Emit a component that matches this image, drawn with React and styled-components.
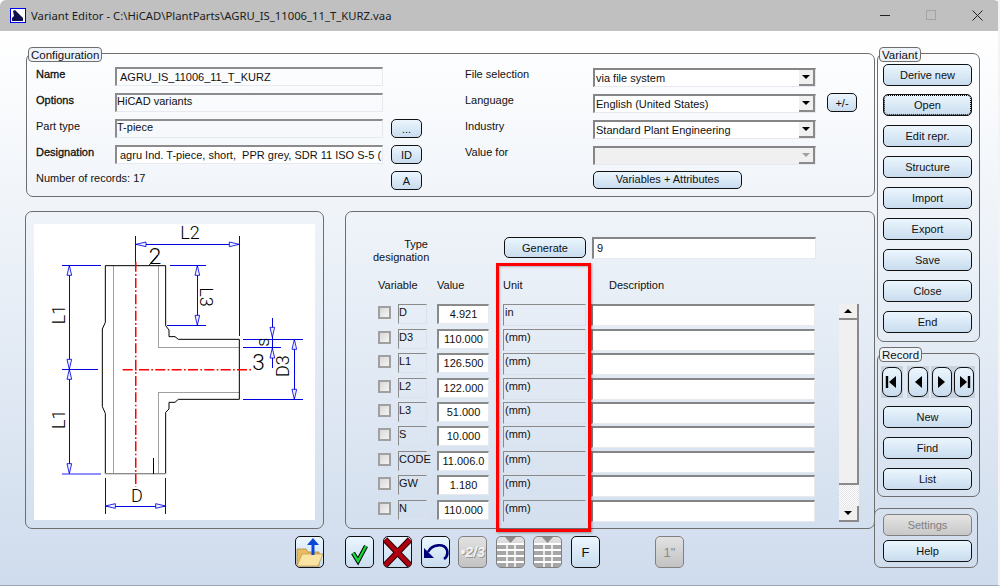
import React from "react";
import styled, { createGlobalStyle } from "styled-components";

const GlobalStyle = createGlobalStyle`
  html, body {
    margin: 0;
    background: #fff;
  }
  body {
    font-family: "Liberation Sans", Arial, sans-serif;
    font-size: 11px;
    color: #111;
  }
`;

const variantButtons = ["Derive new", "Open", "Edit repr.", "Structure", "Import", "Export", "Save", "Close", "End"];
const recordButtons = ["New", "Find", "List"];
const records = [
  { name: "D", value: "4.921", unit: "in" },
  { name: "D3", value: "110.000", unit: "(mm)" },
  { name: "L1", value: "126.500", unit: "(mm)" },
  { name: "L2", value: "122.000", unit: "(mm)" },
  { name: "L3", value: "51.000", unit: "(mm)" },
  { name: "S", value: "10.000", unit: "(mm)" },
  { name: "CODE", value: "11.006.0", unit: "(mm)" },
  { name: "GW", value: "1.180", unit: "(mm)" },
  { name: "N", value: "110.000", unit: "(mm)" },
];

const Arrow = ({ x, y, angle }) => (
  <path
    d="M0 0 L30 -7 V7 Z"
    transform={`translate(${x} ${y}) rotate(${angle})`}
    fill="#eef1ff"
    stroke="#0000e0"
    strokeWidth="2.5"
  />
);

const blueLines = [
  "M343 93V180", "M655 93V392", "M345 118H655",
  "M122 181H240", "M122 493H232", "M145 181V806",
  "M447 181H555", "M438 361H555", "M529 181V361",
  "M667 403H845", "M667 427H780", "M754 340V490",
  "M667 583H845", "M820 403V583",
  "M253 820V928", "M434 820V928", "M253 903H434",
];

const arrows = [
  [345, 118, 0], [655, 118, 180], [145, 181, 90], [145, 493, -90], [145, 493, 90], [145, 806, -90],
  [529, 181, 90], [529, 361, -90], [754, 397, -90], [754, 429, 90], [820, 403, 90], [820, 583, -90],
  [253, 903, 0], [434, 903, 180],
];

const PartDrawing = () => (
  <DrawingSvg viewBox="39 57 843 888">
    <g fill="none" stroke="#a0a0a0" strokeWidth="3" shapeRendering="crispEdges">
      <path d="M277 182V806M412 182V427H655M412 806V562H655" />
    </g>
    <path
      d="M434 182H253V352L244 372V605L253 625V806H434V622L444 612V592H462L472 583H655V403H472L462 395H444V375L434 362Z"
      fill="none"
      stroke="#000"
      strokeWidth="3"
    />
    <path d="M253 806H434" stroke="#8a8a8a" strokeWidth="3" shapeRendering="crispEdges" />
    <g fill="none" stroke="#0000e0" strokeWidth="3" shapeRendering="crispEdges">
      {blueLines.map((d) => (
        <path key={d} d={d} />
      ))}
    </g>
    <path d="M122 806H240" stroke="#8f8fff" strokeWidth="5" shapeRendering="crispEdges" />
    <path d="M344.25 170V845M305 494.25H695" fill="none" stroke="#ff0000" strokeWidth="4.5" strokeDasharray="30 7 5 7" />
    {arrows.map(([x, y, angle]) => (
      <Arrow key={`${x}-${y}-${angle}`} x={x} y={y} angle={angle} />
    ))}
    <path d="M385 180L410 150" stroke="#000" strokeWidth="3" />
    <path d="M397 758V806" stroke="#000" strokeWidth="3" shapeRendering="crispEdges" />
    <DrawingText x="478" y="103">L2</DrawingText>
    <DrawingText x="0" y="0" transform="translate(131 358) rotate(-90)">L1</DrawingText>
    <DrawingText x="0" y="0" transform="translate(131 672) rotate(-90)">L1</DrawingText>
    <DrawingText x="0" y="0" transform="translate(537 247) rotate(90)">L3</DrawingText>
    <DrawingText x="0" y="0" transform="translate(804 516) rotate(-90)">D3</DrawingText>
    <DrawingText x="0" y="0" transform="translate(743 425) rotate(-90)">s</DrawingText>
    <DrawingText x="330" y="890">D</DrawingText>
    <DrawingText x="694" y="494" $large>3</DrawingText>
    <DrawingText x="383" y="176" $large>2</DrawingText>
  </DrawingSvg>
);

const FolderIcon = () => (
  <svg width="27" height="30" viewBox="1 1 27 30">
    <path d="M2 13h9l2 3h11v14H2Z" fill="#e9bd5f" stroke="#a8823a" strokeWidth="0.7" />
    <path d="M7 18h21l-5 12H2Z" fill="#fbe3a2" stroke="#b8934a" strokeWidth="0.7" />
    <path d="M18 19V5" stroke="#0a45d8" strokeWidth="3" />
    <path d="M12 9l6-7 6 7Z" fill="#0a45d8" />
  </svg>
);

const CheckIcon = () => (
  <svg width="27" height="30" viewBox="1 1 27 30">
    <path d="M8 17l5 8 8-15" fill="none" stroke="#000" strokeWidth="4.4" />
    <path d="M8 17l5 8 8-15" fill="none" stroke="#12d63a" strokeWidth="2.4" />
  </svg>
);

const CrossIcon = () => (
  <svg width="27" height="30" viewBox="0 1 28 30">
    <path d="M1 3L27 30M27 3L1 30" fill="none" stroke="#200" strokeWidth="6.5" />
    <path d="M1 3L27 30M27 3L1 30" fill="none" stroke="#b00010" strokeWidth="4.5" />
  </svg>
);

const UndoIcon = () => (
  <svg width="27" height="30" viewBox="1 1 27 30">
    <path d="M7 16C11 8 23 7 26 14C27 18 26 21 23 23" fill="none" stroke="#00007a" strokeWidth="2.6" />
    <path d="M3 12V22H13Z" fill="#00007a" />
  </svg>
);

const GridIcon = () => (
  <svg width="27" height="30" viewBox="1 1 27 30">
    <path d="M9 1h11l-5.5 6Z" fill="#8c8c8c" />
    <rect x="1" y="7" width="27" height="24" fill="#a6a6a6" />
    <path d="M1 8h27M1 14h27M1 20h27M1 26h27" stroke="#fff" strokeWidth="2" />
    <path d="M11 8v24M19 8v24" stroke="#fff" strokeWidth="1.5" />
  </svg>
);

const NavIcon = ({ dir, bar }) => (
  <svg width="14" height="16" viewBox="0 0 14 16">
    {dir === "left" ? <path d="M11 2V14L4 8Z" fill="#000" /> : <path d="M3 2V14L10 8Z" fill="#000" />}
    {bar && <path d={dir === "left" ? "M2 2V14" : "M12 2V14"} stroke="#000" strokeWidth="2.4" />}
  </svg>
);

const App = () => {
  return (
    <Window>
      <GlobalStyle />
      <TitleBar>
        <AppIcon viewBox="0 0 16 15">
          <rect x="0.5" y="0.5" width="15" height="14" fill="#fff" stroke="#0000f0" />
          <path d="M3 3L5 2L13 10V13H2V10L4 8Z" fill="#10104a" />
        </AppIcon>
        <TitleText>Variant Editor - C:\HiCAD\PlantParts\AGRU_IS_11006_11_T_KURZ.vaa</TitleText>
        <WindowControl>
          <svg width="11" height="11"><path d="M0 5.5H10" stroke="#222" /></svg>
        </WindowControl>
        <WindowControl>
          <svg width="11" height="11"><rect x="0.5" y="0.5" width="9" height="9" fill="none" stroke="#a4a4a4" /></svg>
        </WindowControl>
        <WindowControl>
          <svg width="11" height="11"><path d="M0.5 0.5L10.5 10.5M10.5 0.5L0.5 10.5" stroke="#222" /></svg>
        </WindowControl>
      </TitleBar>

      <Body>
        <MainColumn>
          <ConfigPanel>
            <Legend>Configuration</Legend>
            <ConfigLeft>
              <FieldLabel $strong>Name</FieldLabel>
              <TextField $fill="#fbfcfe" $inset>AGRU_IS_11006_11_T_KURZ</TextField>
              <span />
              <FieldLabel $strong>Options</FieldLabel>
              <TextField>HiCAD variants</TextField>
              <span />
              <FieldLabel>Part type</FieldLabel>
              <TextField>T-piece</TextField>
              <SmallButton>...</SmallButton>
              <FieldLabel $strong>Designation</FieldLabel>
              <TextField $fill="#fff" $inset>agru Ind. T-piece, short,  PPR grey, SDR 11 ISO S-5 (1</TextField>
              <SmallButton>ID</SmallButton>
              <RecordCount>Number of records: 17</RecordCount>
              <SmallButton>A</SmallButton>
            </ConfigLeft>
            <ConfigRight>
              <RightLabel>File selection</RightLabel>
              <Select>via file system<SelectArrow><ArrowDown /></SelectArrow></Select>
              <span />
              <RightLabel>Language</RightLabel>
              <Select>English (United States)<SelectArrow><ArrowDown /></SelectArrow></Select>
              <PlusMinusButton>+/-</PlusMinusButton>
              <RightLabel>Industry</RightLabel>
              <Select>Standard Plant Engineering<SelectArrow><ArrowDown /></SelectArrow></Select>
              <span />
              <RightLabel>Value for</RightLabel>
              <Select $disabled><SelectArrow><ArrowDown $disabled /></SelectArrow></Select>
              <span />
              <span />
              <WideButton>Variables + Attributes</WideButton>
            </ConfigRight>
          </ConfigPanel>

          <MiddleRow>
            <DrawingPanel>
              <PartDrawing />
            </DrawingPanel>
            <TablePanel>
              <TypeRow>
                <TypeLabel>Type designation</TypeLabel>
                <GenerateButton>Generate</GenerateButton>
                <TypeInput>9</TypeInput>
              </TypeRow>
              <RecordGrid>
                <HeaderCell $span={2}>Variable</HeaderCell>
                <HeaderCell>Value</HeaderCell>
                <HeaderCell>Unit</HeaderCell>
                <HeaderCell $pad={18}>Description</HeaderCell>
                <span />
                {records.map((row) => (
                  <React.Fragment key={row.name}>
                    <CheckBox />
                    <NameCell>{row.name}</NameCell>
                    <ValueCell>{row.value}</ValueCell>
                    <UnitCell>{row.unit}</UnitCell>
                    <DescriptionCell />
                  </React.Fragment>
                ))}
                <ScrollBar>
                  <ScrollButton><ArrowUp /></ScrollButton>
                  <ScrollThumb />
                  <ScrollTrack />
                  <ScrollButton><ArrowDown /></ScrollButton>
                </ScrollBar>
              </RecordGrid>
              <Highlight />
            </TablePanel>
          </MiddleRow>

          <Toolbar>
            <IconButton $after={21}><FolderIcon /></IconButton>
            <IconButton $after={9}><CheckIcon /></IconButton>
            <IconButton $after={9}><CrossIcon /></IconButton>
            <IconButton $after={8}><UndoIcon /></IconButton>
            <IconButton $after={9} $off><FractionText>•2/3</FractionText></IconButton>
            <IconButton $after={8} $off><GridIcon /></IconButton>
            <IconButton $after={9} $off><GridIcon /></IconButton>
            <IconButton $after={55}><LetterText>F</LetterText></IconButton>
            <IconButton $off><LetterText $off>1"</LetterText></IconButton>
          </Toolbar>
        </MainColumn>

        <SideColumn>
          <SidePanel $height={289}>
            <Legend>Variant</Legend>
            {variantButtons.map((label) => (
              <SideButton key={label} $focused={label === "Open"}>{label}</SideButton>
            ))}
          </SidePanel>
          <RecordPanel>
            <Legend>Record</Legend>
            <NavRow>
              <NavCell $after={4}><NavButton><NavIcon dir="left" bar /></NavButton></NavCell>
              <NavCell $after={2}><NavButton><NavIcon dir="left" /></NavButton></NavCell>
              <NavCell><NavButton><NavIcon dir="right" /></NavButton></NavCell>
              <NavCell><NavButton><NavIcon dir="right" bar /></NavButton></NavCell>
            </NavRow>
            {recordButtons.map((label) => (
              <SideButton key={label}>{label}</SideButton>
            ))}
          </RecordPanel>
          <SettingsPanel>
            <SideButton $off>Settings</SideButton>
            <SideButton>Help</SideButton>
          </SettingsPanel>
        </SideColumn>
      </Body>
    </Window>
  );
};

export default App;

const Window = styled.div`
  width: 1000px;
  height: 586px;
  overflow: hidden;
  display: flex;
  flex-direction: column;
  box-sizing: border-box;
  border-bottom: 1px solid #9fa8b4;
  border-right: 2px solid #f4f4f4;
  background: linear-gradient(#fff 31px, #cfdced);
`;

const TitleBar = styled.div`
  height: 31px;
  flex-shrink: 0;
  display: flex;
  align-items: center;
  margin-right: -2px;
  padding-left: 10px;
  background: #c0c0c0;
  border-radius: 6px 6px 0 0;
`;

const AppIcon = styled.svg`
  width: 16px;
  height: 15px;
  margin-right: 5px;
`;

const TitleText = styled.div`
  flex: 1;
  font-family: "Noto Sans", sans-serif;
  font-size: 11.3px;
  color: #1c1c1c;
`;

const WindowControl = styled.div`
  width: 46px;
  display: flex;
  justify-content: center;
`;

const Body = styled.div`
  display: flex;
  padding: 22px 0 0 26px;
`;

const MainColumn = styled.div`
  width: 849px;
  display: flex;
  flex-direction: column;
`;

const SideColumn = styled.div`
  width: 105px;
  display: flex;
  flex-direction: column;
`;

const Panel = styled.div`
  position: relative;
  box-sizing: border-box;
  border: 1px solid #6e6e6e;
  border-radius: 7px;
`;

const Legend = styled.div`
  position: absolute;
  top: -7px;
  left: 1px;
  height: 15px;
  line-height: 14px;
  box-sizing: border-box;
  padding: 0 2px;
  font-size: 11.5px;
  border: 1px solid #6e6e6e;
  border-radius: 4px;
  background: #eef3fa;
`;

const ConfigPanel = styled(Panel)`
  height: 144px;
  display: flex;
  padding: 13px 0 0 9px;
`;

const ConfigLeft = styled.div`
  display: grid;
  grid-template-columns: 79px 268px 39px;
  grid-auto-rows: 19px;
  row-gap: 7px;
  width: 429px;
`;

const ConfigRight = styled.div`
  display: grid;
  grid-template-columns: 128px 223px 41px;
  grid-auto-rows: 19px;
  row-gap: 7px;
  margin-top: 1px;
`;

const FieldLabel = styled.div`
  line-height: 15px;
  ${({ $strong }) => $strong && "-webkit-text-stroke: 0.3px #111;"}
`;

const RightLabel = styled(FieldLabel)`
  line-height: 12px;
`;

const RecordCount = styled(FieldLabel)`
  grid-column: span 2;
`;

const TextField = styled.div`
  box-sizing: border-box;
  height: 19px;
  line-height: ${({ $inset }) => ($inset ? "17px" : "13px")};
  padding-left: ${({ $inset }) => ($inset ? "3px" : "0")};
  white-space: pre;
  overflow: hidden;
  background: ${({ $fill }) => $fill || "transparent"};
  border: 1px solid #e6e9ee;
  border-top: 2px solid #8c8c8c;
  border-left: 2px solid #8c8c8c;
`;

const Select = styled.div`
  box-sizing: border-box;
  height: 19px;
  position: relative;
  padding-left: 1px;
  line-height: 16px;
  background: ${({ $disabled }) => ($disabled ? "#f0f0f0" : "#fff")};
  border: 1px solid #e6e9ee;
  border-top: 2px solid #858585;
  border-left: 2px solid #858585;
  white-space: nowrap;
`;

const SelectArrow = styled.div`
  position: absolute;
  top: 0;
  right: 0;
  width: 16px;
  height: 16px;
  display: flex;
  align-items: center;
  justify-content: center;
  box-sizing: border-box;
  background: #f0f0f0;
  border-right: 2px solid #8a8a8a;
  border-bottom: 2px solid #8a8a8a;
`;

const ArrowDown = styled.div`
  width: 0;
  height: 0;
  border-left: 4px solid transparent;
  border-right: 4px solid transparent;
  border-top: 4px solid ${({ $disabled }) => ($disabled ? "#a0a0a0" : "#000")};
`;

const ArrowUp = styled.div`
  width: 0;
  height: 0;
  border-left: 4px solid transparent;
  border-right: 4px solid transparent;
  border-bottom: 4px solid #000;
`;

const Button = styled.div`
  box-sizing: border-box;
  display: flex;
  align-items: center;
  justify-content: center;
  border: 1px solid #111;
  border-radius: 5px;
  background: linear-gradient(#ebf6fe, #c9dcee);
  white-space: nowrap;
`;

const SmallButton = styled(Button)`
  width: 31px;
  height: 19px;
  justify-self: end;
`;

const PlusMinusButton = styled(SmallButton)`
  width: 30px;
  margin-top: -1px;
`;

const WideButton = styled(Button)`
  width: 149px;
  height: 18px;
  margin-top: -1px;
  padding-bottom: 3px;
`;

const MiddleRow = styled.div`
  display: flex;
  justify-content: space-between;
  margin-top: 14px;
`;

const DrawingPanel = styled(Panel)`
  width: 299px;
  height: 318px;
  padding: 12px 8px;
  margin-left: -1px;
`;

const DrawingSvg = styled.svg`
  display: block;
  width: 281px;
  height: 296px;
  background: #fff;
`;

const DrawingText = styled.text`
  font-family: Roboto, sans-serif;
  font-weight: 300;
  font-size: ${({ $large }) => ($large ? "68px" : "54px")};
  fill: #000;
`;

const TablePanel = styled(Panel)`
  width: 530px;
  height: 318px;
  padding: 25px 0 0 27px;
`;

const TypeRow = styled.div`
  display: flex;
  align-items: flex-start;
`;

const TypeLabel = styled.div`
  width: 55px;
  margin-right: 76px;
  padding-top: 1px;
  text-align: right;
  line-height: 13px;
`;

const GenerateButton = styled(Button)`
  width: 82px;
  height: 21px;
  margin-right: 6px;
`;

const TypeInput = styled.div`
  box-sizing: border-box;
  width: 224px;
  height: 22px;
  padding-left: 3px;
  line-height: 19px;
  background: #fff;
  border: 1px solid #e6e9ee;
  border-top: 2px solid #858585;
  border-left: 2px solid #858585;
`;

const RecordGrid = styled.div`
  display: grid;
  grid-template-columns: 20px 39px 66px 88px 248px 20px;
  grid-template-rows: 26px repeat(9, 22px);
  row-gap: 2.4px;
  margin: 12px 0 0 5px;
`;

const HeaderCell = styled.div`
  grid-column: span ${({ $span }) => $span || 1};
  padding-left: ${({ $pad }) => $pad || 0}px;
  line-height: 14px;
  padding-top: 2px;
`;

const CheckBox = styled.div`
  box-sizing: border-box;
  width: 13px;
  height: 13px;
  margin-top: 2px;
  border: 2px solid #a0a0a0;
  background: linear-gradient(135deg, #d8d8d8, #f4f4f4);
`;

const NameCell = styled.div`
  box-sizing: border-box;
  width: 29px;
  height: 20px;
  line-height: 14px;
  white-space: nowrap;
  border-top: 1px solid #8a8a8a;
  border-left: 1px solid #8a8a8a;
  border-right: 1px solid #dbe2ec;
  border-bottom: 1px solid #dbe2ec;
`;

const ValueCell = styled.div`
  box-sizing: border-box;
  width: 52px;
  height: 20px;
  text-align: center;
  line-height: 17px;
  background: #fff;
  border: 1px solid #e6e9ee;
  border-top: 2px solid #8a8a8a;
  border-left: 2px solid #8a8a8a;
  white-space: nowrap;
`;

const UnitCell = styled.div`
  box-sizing: border-box;
  width: 83px;
  height: 22px;
  padding-left: 1px;
  line-height: 14px;
  border-top: 1px solid #8a8a8a;
  border-left: 1px solid #8a8a8a;
  border-right: 1px solid #dbe2ec;
  border-bottom: 1px solid #dbe2ec;
`;

const DescriptionCell = styled.div`
  box-sizing: border-box;
  width: 224px;
  height: 22px;
  background: #fff;
  border: 1px solid #e6e9ee;
  border-top: 2px solid #858585;
  border-left: 2px solid #858585;
`;

const ScrollBar = styled.div`
  grid-column: 6;
  grid-row: 2 / span 9;
  display: flex;
  flex-direction: column;
`;

const ScrollButton = styled.div`
  flex: 0 0 16px;
  display: flex;
  align-items: center;
  justify-content: center;
  box-sizing: border-box;
  background: #f0f0f0;
  border-right: 2px solid #8a8a8a;
  border-bottom: 2px solid #8a8a8a;
`;

const ScrollThumb = styled.div`
  flex: 0 0 165px;
  box-sizing: border-box;
  background: #f0f0f0;
  border-right: 2px solid #8a8a8a;
  border-bottom: 2px solid #8a8a8a;
`;

const ScrollTrack = styled.div`
  flex: 1;
  background: repeating-conic-gradient(#fff 0 25%, #e2e4e8 0 50%) 0 0 / 2px 2px;
`;

const Highlight = styled.div`
  position: absolute;
  left: 150px;
  top: 51px;
  width: 95px;
  height: 269px;
  box-sizing: border-box;
  border: 3px solid #f00;
  box-shadow: 1px 1px 2px rgba(0, 0, 0, 0.35), inset 1px 1px 2px rgba(0, 0, 0, 0.25);
`;

const Toolbar = styled.div`
  display: flex;
  margin: 7px 0 0 269px;
`;

const IconButton = styled(Button)`
  flex: 0 0 29px;
  height: 32px;
  overflow: hidden;
  margin-right: ${({ $after }) => $after || 0}px;
  ${({ $off }) => $off && "background: linear-gradient(#e2e2e2, #c2c2c2); border-color: #808080;"}
`;

const FractionText = styled.span`
  font-size: 14px;
  font-weight: bold;
  font-style: italic;
  color: #f2f2f2;
  text-shadow: 1px 1px 0 #999;
`;

const LetterText = styled.span`
  font-size: 13px;
  color: ${({ $off }) => ($off ? "#8a8a8a" : "#111")};
`;

const SidePanel = styled(Panel)`
  height: ${({ $height }) => $height}px;
  margin-left: 2px;
  width: 103px;
  display: flex;
  flex-direction: column;
  gap: 9px;
  padding: 10px 0 0 5px;
`;

const RecordPanel = styled(SidePanel)`
  height: 144px;
  margin-top: 11px;
  padding-top: 12px;
`;

const NavRow = styled.div`
  display: flex;
  margin: 0 0 -1px -2px;
`;

const NavCell = styled.div`
  height: 32px;
  box-sizing: border-box;
  padding: 1px;
  margin-right: ${({ $after }) => $after || 0}px;
  background: #c9d3df;
`;

const NavButton = styled(Button)`
  width: 20px;
  height: 30px;
  border-radius: 7px;
`;

const SettingsPanel = styled(Panel)`
  width: 104px;
  height: 60px;
  margin: 11px 0 0 -1px;
  display: flex;
  flex-direction: column;
  gap: 4px;
  padding: 5px 0 0 8px;
`;

const SideButton = styled(Button)`
  position: relative;
  flex: 0 0 22px;
  width: 89px;
  ${({ $off }) => $off && "background: linear-gradient(#e4e4e4, #c8c8c8); border-color: #808080; color: #808080;"}
  ${({ $focused }) =>
    $focused &&
    `margin-top: -1px;
    &::after {
      content: "";
      position: absolute;
      inset: 0;
      border: 1px dotted #000;
      border-radius: 4px;
    }`}
`;
